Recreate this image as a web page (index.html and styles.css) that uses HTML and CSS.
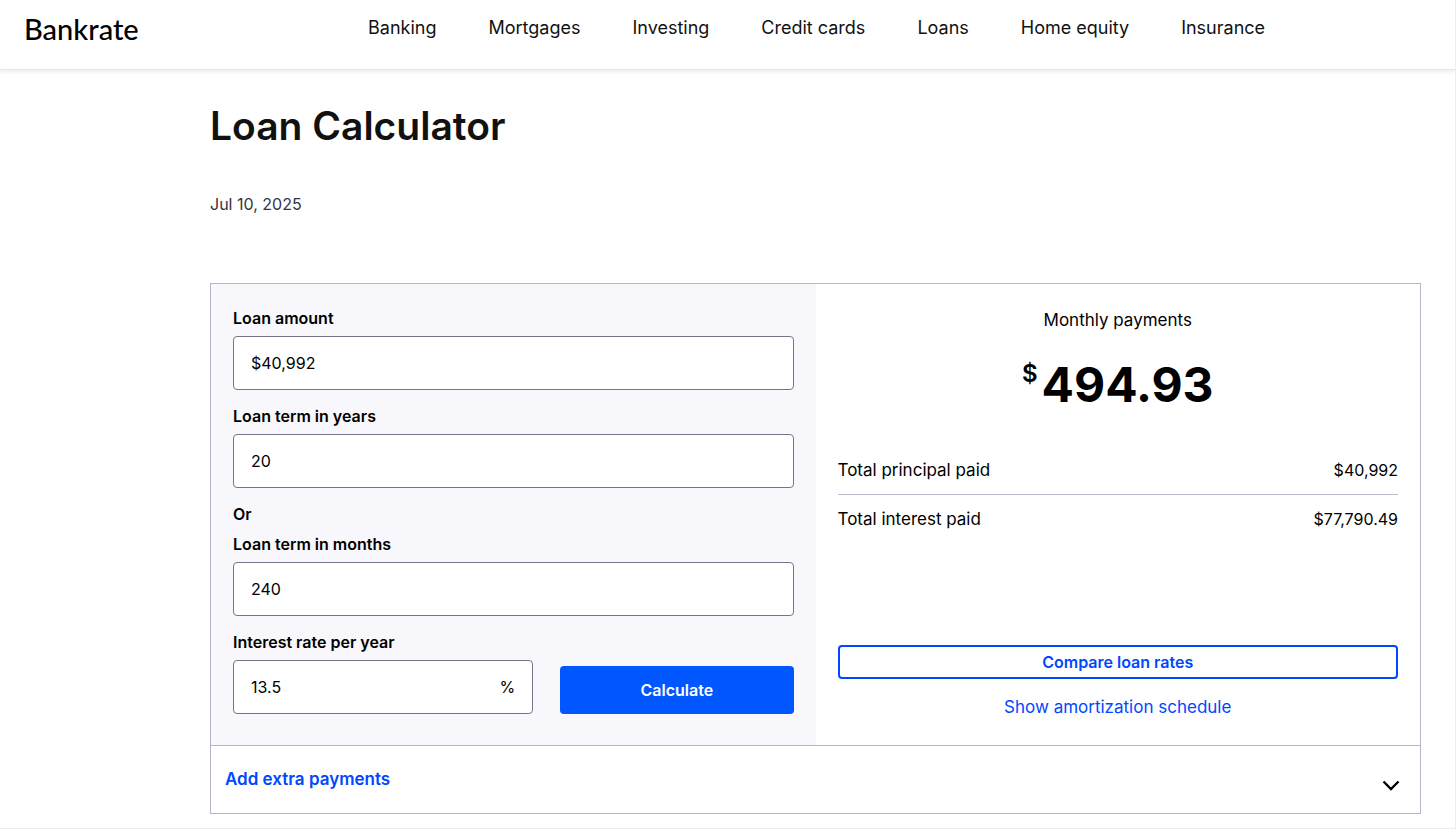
FILE: index.html
```html
<!DOCTYPE html>
<html lang="en">
<head>
<meta charset="utf-8">
<meta name="viewport" content="width=device-width, initial-scale=1">
<title>Loan Calculator</title>
<link rel="stylesheet" href="styles.css">
</head>
<body class="page">
<header class="site-header">
  <a class="logo" href="#">Bankrate</a>
  <nav class="site-nav" aria-label="Main">
    <a href="#">Banking</a>
    <a href="#">Mortgages</a>
    <a href="#">Investing</a>
    <a href="#">Credit cards</a>
    <a href="#">Loans</a>
    <a href="#">Home equity</a>
    <a href="#">Insurance</a>
  </nav>
</header>
<main class="content">
  <h1 class="title">Loan Calculator</h1>
  <time class="date" datetime="2025-07-10">Jul 10, 2025</time>
  <section class="calculator">
    <div class="panels">
      <form class="inputs">
        <div class="field">
          <label class="label" for="amount">Loan amount</label>
          <input class="box" id="amount" type="text" value="$40,992">
        </div>
        <div class="field">
          <label class="label" for="years">Loan term in years</label>
          <input class="box" id="years" type="text" value="20">
        </div>
        <div class="field">
          <span class="label">Or</span>
          <label class="label" for="months">Loan term in months</label>
          <input class="box" id="months" type="text" value="240">
        </div>
        <div class="rate-row">
          <div class="field">
            <label class="label" for="rate">Interest rate per year</label>
            <div class="box box-unit">
              <input class="bare" id="rate" type="text" value="13.5">
              <span>%</span>
            </div>
          </div>
          <button class="calculate" type="button">Calculate</button>
        </div>
      </form>
      <div class="results">
        <p class="caption">Monthly payments</p>
        <p class="payment"><span class="currency">$</span><span>494.93</span></p>
        <dl class="totals">
          <div class="total"><dt>Total principal paid</dt><dd>$40,992</dd></div>
          <div class="total"><dt>Total interest paid</dt><dd>$77,790.49</dd></div>
        </dl>
        <div class="actions">
          <button class="compare" type="button">Compare loan rates</button>
          <a class="schedule" href="#">Show amortization schedule</a>
        </div>
      </div>
    </div>
    <button class="extra" type="button">
      <span>Add extra payments</span>
      <svg class="chevron" viewBox="0 0 18 12" aria-hidden="true"><path d="M1.500 2.500 9 10l7.500-7.500" fill="none" stroke="#000" stroke-width="2.400"/></svg>
    </button>
  </section>
</main>
</body>
</html>
```
FILE: styles.css
```css
* {
  box-sizing: border-box;
}

.page {
  min-height: 100vh;
  margin: 0;
  border-right: 1px solid #ededed;
  border-bottom: 1px solid #ededed;
  background: #fff;
  color: #000;
  font: 17px/24px Inter, "Liberation Sans", sans-serif;
}

a {
  text-decoration: none;
}

.site-header {
  display: flex;
  align-items: flex-start;
  height: 70px;
  padding: 12px 24px;
  border-bottom: 1px solid #e6e6e6;
  box-shadow: 0 2px 4px #00000014;
}

.logo {
  width: 344px;
  color: #000;
  font: 500 29px/34px Lato, sans-serif;
}

.site-nav {
  display: flex;
  gap: 52px;
  font-size: 18px;
  line-height: 32px;
  white-space: nowrap;
}

.site-nav a {
  color: #111;
}

.content {
  padding: 32px 34px 14px 210px;
}

.title {
  margin: 0;
  color: #111;
  font-size: 39px;
  font-weight: 600;
  line-height: 48px;
}

.date {
  display: block;
  margin-top: 42px;
  color: #333544;
  font-size: 16px;
}

.calculator {
  margin-top: 67px;
  border: 1px solid #b4b5c8;
}

.panels {
  display: grid;
  grid-template-columns: 1fr 1fr;
}

.inputs {
  display: flex;
  flex-direction: column;
  gap: 14px;
  padding: 22px 22px 31px;
  background: #f8f8fc;
}

.field {
  display: flex;
  flex-direction: column;
  gap: 6px;
}

.label {
  font-size: 16px;
  font-weight: 600;
}

.box {
  width: 100%;
  height: 54px;
  padding: 0 17px;
  border: 1px solid #74758a;
  border-radius: 4px;
  background: #fff;
  color: #000;
  font: inherit;
  font-size: 16px;
}

.box-unit {
  display: flex;
  align-items: center;
}

.bare {
  flex: 1;
  min-width: 0;
  padding: 0;
  border: 0;
  font: inherit;
}

.rate-row {
  display: grid;
  grid-template-columns: 9fr 7fr;
  align-items: end;
  gap: 27px;
}

.calculate,
.compare {
  border-radius: 4px;
  font: inherit;
  font-size: 16px;
  font-weight: 600;
}

.calculate {
  height: 48px;
  border: 0;
  background: #0157ff;
  color: #fff;
}

.results {
  display: flex;
  flex-direction: column;
  padding: 24px 22px 26px;
}

.caption {
  margin: 0;
  text-align: center;
}

.payment {
  display: flex;
  justify-content: center;
  gap: 4px;
  margin: 22px 0 30px;
  font-size: 48px;
  font-weight: 700;
  line-height: 62px;
}

.currency {
  font-size: 24px;
  font-weight: 600;
  line-height: 40px;
}

.totals {
  margin: 0;
}

.total {
  display: flex;
  justify-content: space-between;
  padding: 12px 0;
}

.total + .total {
  border-top: 1px solid #bcbdcc;
}

.total dd {
  margin: 0;
  font-size: 16px;
}

.actions {
  display: flex;
  flex-direction: column;
  align-items: center;
  gap: 16px;
  margin-top: auto;
}

.compare {
  width: 100%;
  height: 34px;
  padding: 0;
  border: 2px solid #0047ff;
  background: #fff;
  color: #0047ff;
}

.schedule {
  color: #0047ff;
}

.extra {
  display: flex;
  justify-content: space-between;
  width: 100%;
  padding: 21px 20px 22px 14px;
  border: 0;
  border-top: 1px solid #b4b5c8;
  background: #fff;
  color: #0047ff;
  font: inherit;
  font-weight: 600;
}

.chevron {
  align-self: flex-end;
  width: 18px;
  height: 12px;
}
```
